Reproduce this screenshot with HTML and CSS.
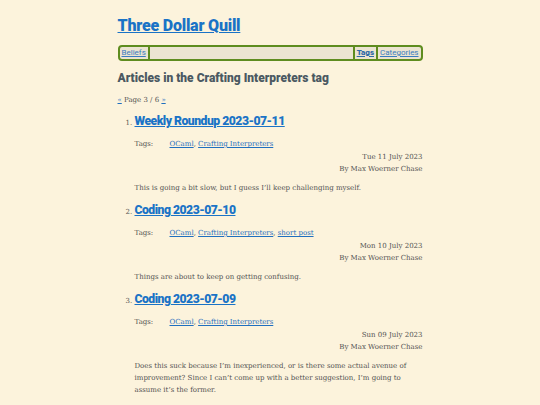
FILE: index.html
```html
<!DOCTYPE html>
<html lang="en">
<head>
<meta charset="utf-8">
<title>Three Dollar Quill</title>
<link rel="stylesheet" href="styles.css">
</head>
<body>
<div class="page">
  <header class="site-header">
    <h1 class="site-title"><a href="#">Three Dollar Quill</a></h1>
    <nav class="nav">
      <div class="nav-left"><a href="#" class="nav-link">Beliefs</a></div>
      <div class="nav-right"><a href="#" class="nav-link current">Tags</a><a href="#" class="nav-link">Categories</a></div>
    </nav>
  </header>
  <main>
    <h2 class="page-heading">Articles in the Crafting Interpreters tag</h2>
    <p class="pager"><a href="#">«</a> Page 3 / 6 <a href="#">»</a></p>
    <ol class="articles">
      <li class="article">
        <h3 class="article-title"><a href="#">Weekly Roundup 2023-07-11</a></h3>
        <div class="tags"><span class="tags-label">Tags:</span><span><a href="#">OCaml</a>, <a href="#">Crafting Interpreters</a></span></div>
        <div class="meta"><div>Tue 11 July 2023</div><div>By Max Woerner Chase</div></div>
        <p class="summary">This is going a bit slow, but I guess I’ll keep challenging myself.</p>
      </li>
      <li class="article">
        <h3 class="article-title"><a href="#">Coding 2023-07-10</a></h3>
        <div class="tags"><span class="tags-label">Tags:</span><span><a href="#">OCaml</a>, <a href="#">Crafting Interpreters</a>, <a href="#">short post</a></span></div>
        <div class="meta"><div>Mon 10 July 2023</div><div>By Max Woerner Chase</div></div>
        <p class="summary">Things are about to keep on getting confusing.</p>
      </li>
      <li class="article">
        <h3 class="article-title"><a href="#">Coding 2023-07-09</a></h3>
        <div class="tags"><span class="tags-label">Tags:</span><span><a href="#">OCaml</a>, <a href="#">Crafting Interpreters</a></span></div>
        <div class="meta"><div>Sun 09 July 2023</div><div>By Max Woerner Chase</div></div>
        <p class="summary">Does this suck because I’m inexperienced, or is there some actual avenue of improvement? Since I can’t come up with a better suggestion, I’m going to assume it’s the former.</p>
      </li>
    </ol>
  </main>
</div>
</body>
</html>
```
FILE: styles.css
```css
html, body {
  margin: 0;
  padding: 0;
}
body {
  background: #fcf3dc;
  color: #525252;
  font-family: "DejaVu Serif", serif;
  font-size: 7px;
}
a {
  color: #1f6fbf;
}
.page {
  width: 305px;
  margin: 0 auto;
  padding-top: 14px;
}
.site-title {
  margin: 0;
  font-family: Roboto, sans-serif;
  font-size: 16px;
  font-weight: 900;
  letter-spacing: -0.2px;
  line-height: 24px;
}
.site-title a {
  color: #1a73c6;
}
.nav {
  margin-top: 7px;
  display: flex;
  justify-content: space-between;
  align-items: stretch;
  background: #ebe4d1;
  border: 2px solid #5e8c1f;
  border-radius: 4px;
  height: 12px;
  font-family: Roboto, sans-serif;
  font-size: 8px;
  line-height: 12px;
}
.nav-left, .nav-right {
  display: flex;
}
.nav-link {
  padding: 0 2px;
  color: #3a7cc0;
}
.nav-left .nav-link {
  border-right: 2px solid #5e8c1f;
}
.nav-right .nav-link {
  border-left: 2px solid #5e8c1f;
}
.nav-link.current {
  font-weight: 900;
  color: #2f6aa8;
}
.page-heading {
  margin: 8px 0 0;
  font-family: Roboto, sans-serif;
  font-size: 12px;
  font-weight: 900;
  color: #4b5962;
  line-height: 18px;
}
.pager {
  margin: 8px 0 0;
  font-size: 7px;
  line-height: 10px;
}
.articles {
  margin: 6px 0 0;
  padding-left: 17px;
}
.article {
  font-size: 7px;
}
.article::marker {
  font-size: 7px;
  color: #555;
}
.article-title {
  margin: 0;
  font-family: Roboto, sans-serif;
  font-size: 12.2px;
  font-weight: 900;
  letter-spacing: -0.5px;
  line-height: 20px;
}
.article-title a {
  color: #1a73c6;
}
.tags {
  margin-top: 7px;
  display: flex;
  line-height: 12px;
}
.tags-label {
  width: 35px;
}
.meta {
  margin-top: 1px;
  text-align: right;
  line-height: 12px;
}
.summary {
  margin: 7px 0 6px;
  line-height: 12px;
}
```
